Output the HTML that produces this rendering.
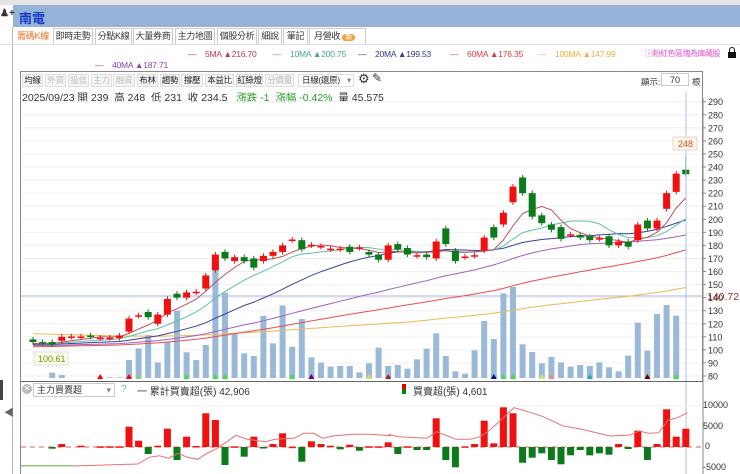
<!DOCTYPE html>
<html><head><meta charset="utf-8">
<style>
*{margin:0;padding:0;box-sizing:border-box}
body{width:740px;height:474px;overflow:hidden;background:#fff;font-family:"Liberation Sans","Noto Sans CJK TC",sans-serif;font-size:10px;color:#333;position:relative}
.a{position:absolute;white-space:nowrap}
.tab{position:absolute;top:28px;height:16px;border:1px solid #ccc;border-bottom:none;font-size:9px;line-height:15px;text-align:center;color:#333;background:#fff;white-space:nowrap;overflow:hidden;letter-spacing:-0.3px}
.btn{position:absolute;top:74px;height:13px;border:1px solid #ddd;font-size:8.5px;line-height:11px;text-align:center;color:#222;background:#f6f6f6;white-space:nowrap;overflow:hidden;letter-spacing:-0.3px}
.dis{color:#bbb}
.lg{position:absolute;white-space:nowrap;font-size:8.5px;letter-spacing:-0.2px}
</style></head><body>
<div class="a" style="left:0;top:0;width:740px;height:5px;background:#e4e4e4"></div>
<div class="a" style="left:13px;top:5px;width:727px;height:22px;background:#95b3d7"></div>
<div class="a" style="left:0;top:8px;font-size:10px;color:#333;font-weight:bold">♟+</div>
<div class="a" style="left:19px;top:8px;font-size:13px;color:#1438c8;font-weight:bold">南電</div>
<div class="a" style="left:12px;top:27px;width:1px;height:447px;background:#bbb"></div>
<div class="a" style="left:0;top:380px;width:3px;height:20px;background:#444"></div>
<div class="a" style="left:4px;top:404px;font-size:10px;color:#666">◀</div>
<div class="a" style="left:0;top:44px;width:740px;height:1px;background:#ddd"></div>

<div class="tab" style="left:15px;width:36px;color:#f07020;border-color:#fff">籌碼K線</div>
<div class="tab" style="left:53px;width:40px">即時走勢</div>
<div class="tab" style="left:95px;width:37px">分點K線</div>
<div class="tab" style="left:133px;width:40px">大量券商</div>
<div class="tab" style="left:175px;width:40px">主力地圖</div>
<div class="tab" style="left:217px;width:40px">個股分析</div>
<div class="tab" style="left:258px;width:24px">細說</div>
<div class="tab" style="left:283px;width:25px">筆記</div>
<div class="tab" style="left:309px;width:57px;text-align:left;padding-left:4px">月營收 <span style="background:#f5a040;color:#fff;border-radius:6px;padding:0 3px;font-size:7px">新</span></div>

<div class="lg" style="left:188px;top:49px;color:#c03850">—&nbsp;&nbsp;&nbsp;&nbsp;5MA ▲216.70</div>
<div class="lg" style="left:273px;top:49px;color:#40a890">—&nbsp;&nbsp;&nbsp;&nbsp;10MA ▲200.75</div>
<div class="lg" style="left:358px;top:49px;color:#303890">—&nbsp;&nbsp;&nbsp;&nbsp;20MA ▲199.53</div>
<div class="lg" style="left:450px;top:49px;color:#e03838">—&nbsp;&nbsp;&nbsp;&nbsp;60MA ▲176.35</div>
<div class="lg" style="left:538px;top:49px;color:#f0b040">—&nbsp;&nbsp;&nbsp;&nbsp;100MA ▲147.99</div>
<div class="lg" style="left:645px;top:48px;font-size:8px;color:#e050d0;letter-spacing:-0.5px">ⓘ粉紅色區塊為庫藏股</div>
<div class="a" style="left:729px;top:47px;width:6px;height:5px;border:1.5px solid #111;border-bottom:none;border-radius:3px 3px 0 0"></div>
<div class="a" style="left:728px;top:52px;width:8px;height:6px;background:#111"></div>
<div class="lg" style="left:95px;top:60px;color:#9040b0">—&nbsp;&nbsp;&nbsp;&nbsp;40MA ▲187.71</div>

<div class="a" style="left:20px;top:71px;width:683px;height:310px;border:1px solid #888;border-bottom:none"></div>
<div class="btn" style="left:22px;width:21px">均線</div>
<div class="btn dis" style="left:45px;width:21px">外資</div>
<div class="btn dis" style="left:68px;width:21px">投信</div>
<div class="btn dis" style="left:91px;width:21px">主力</div>
<div class="btn dis" style="left:113px;width:22px">融資</div>
<div class="btn" style="left:137px;width:21px">布林</div>
<div class="btn" style="left:160px;width:20px">趨勢</div>
<div class="btn" style="left:181px;width:22px">撐壓</div>
<div class="btn" style="left:205px;width:29px">本益比</div>
<div class="btn" style="left:236px;width:27px">紅綠燈</div>
<div class="btn dis" style="left:265px;width:29px">分價量</div>
<div class="btn" style="left:298px;width:56px;text-align:left;padding-left:3px;background:#fff">日線(還原)<span style="position:absolute;right:2px;color:#888">▾</span></div>
<div class="a" style="left:358px;top:71px;font-size:13px;color:#333">⚙</div>
<div class="a" style="left:372px;top:71px;font-size:12px;color:#333">✎</div>
<div class="a" style="left:641px;top:76px;font-size:8.5px">顯示:</div>
<div class="a" style="left:661px;top:73px;width:28px;height:13px;border:1px solid #ccc;font-size:9px;text-align:center;line-height:12px">70</div>
<div class="a" style="left:692px;top:76px;font-size:8.5px">根</div>
<div class="a" style="left:22px;top:90px;font-size:10.5px;color:#333">2025/09/23 開 239 &nbsp;高 248 &nbsp;低 231 &nbsp;收 234.5 &nbsp;&nbsp;<span style="color:#2a9a2a">漲跌 -1 &nbsp;漲幅 -0.42%</span> &nbsp;量 45,575</div>

<svg class="a" style="left:0;top:0" width="740" height="474" id="sv"></svg>

<div class="a" style="left:20px;top:381px;width:683px;height:1px;background:#666"></div>
<div class="a" style="left:20px;top:381px;width:1px;height:93px;background:#888"></div>
<div class="a" style="left:22px;top:384px;width:10px;height:10px;border-radius:5px;background:#bbb;color:#fff;font-size:8px;line-height:10px;text-align:center">✕</div>
<div class="a" style="left:33px;top:383px;width:82px;height:14px;border:1px solid #ccc;font-size:9px;line-height:12px;padding-left:3px">主力買賣超<span style="position:absolute;right:3px;color:#888">▾</span></div>
<div class="a" style="left:121px;top:384px;font-size:10px;color:#6ab0e0">?</div>
<div class="a" style="left:137px;top:383px;font-size:10px;color:#333">一 累計買賣超(張) 42,906</div>
<div class="a" style="left:402px;top:384px;width:4px;height:5px;background:#e00"></div>
<div class="a" style="left:402px;top:389px;width:4px;height:5px;background:#080"></div>
<div class="a" style="left:413px;top:383px;font-size:10px;color:#333">買賣超(張) 4,601</div>
<div class="a" style="left:703px;top:400px;font-size:9px">10000</div>
<div class="a" style="left:703px;top:421px;font-size:9px">5000</div>
<div class="a" style="left:705px;top:441px;font-size:9px">0</div>
<div class="a" style="left:703px;top:462px;font-size:9px">-5000</div>

<script>
(function(){
var S=document.getElementById('sv'),h='';
function y(p){return 376-(p-80)*1.306}
for(var p=80;p<=290;p+=10){var yy=y(p);h+='<line x1="21" x2="702" y1="'+yy+'" y2="'+yy+'" stroke="#f0f0f0"/><line x1="703" x2="706" y1="'+yy+'" y2="'+yy+'" stroke="#888"/><text x="708" y="'+(yy+3.5)+'" font-size="9" fill="#333" font-family="Liberation Sans">'+p+'</text>';}
h+='<line x1="703" x2="703" y1="98" y2="474" stroke="#888"/>';
var C=[[108,106],[106,105],[106,104],[107,110],[110,110.3],[110,110.3],[111,110],[109,109.3],[109,109.3],[109,111],[114,124],[126,126.5],[129,125],[120,127],[127,139],[143,140],[140,144],[144,144.5],[147,157],[161,173],[175,170],[168,171],[171,168],[170,163],[168,172],[172,175],[175,180],[184,184.5],[184,177],[180,180.5],[179,179.5],[177,177.5],[177,177.5],[179,175],
[178,178.5],[175,173],[173,169],[169,180],[181,177],[178,173],[172,172.5],[173,171],[170,183],[193,181],[176,168],[171,171.5],[172,172.5],[176,186],[194,186],[196,205],[213,225],[232,220],[220,202],[203,197],[196,192],[194,185],[188,188.5],[188,186],[187,184],[185,185.5],[187,180],[180,183],[183,179],[184,196],[199,193],[193,199],[208,220],[221,235],[238,234.5]];
var V=[655,655,638,645,655,655,660,660,652,652,600,565,525,607,545,452,577,600,555,330,398,520,580,588,468,550,436,560,477,592,608,620,618,618];
V=V.map(function(v){return 160+v/3});
[718,727,700,653,708,705,716,688,656,610,678,724,731,661,573,627,490,471,643,666,700,681,697,710,705,708,697,712,724,677,578,662,552,525,557].forEach(function(v,i){if(i>0)V.push(130+v/3)});
function X(k){return 33+k*9.6}
var cl=[];for(var i=0;i<100;i++)cl.push(i<40?128:(100+(i-40)*0.08));C.forEach(function(c){cl.push(c[1])});
function ma(n,col){var pts=[];for(var k=0;k<C.length;k++){var e=100+k,s=0;for(var j=e-n+1;j<=e;j++)s+=cl[j];pts.push(X(k).toFixed(1)+','+y(s/n).toFixed(1));}return '<polyline points="'+pts.join(' ')+'" fill="none" stroke="'+col+'" stroke-width="1"/>';}
V.forEach(function(t,k){h+='<rect x="'+(X(k)-3)+'" y="'+t+'" width="6" height="'+(378-t)+'" fill="#9ab8d8"/>'});
h+='<line x1="21" x2="702" y1="296" y2="296" stroke="#aab4e0"/>';
h+=ma(100,'#f0b850')+ma(60,'#e85050')+ma(40,'#a060c0')+ma(20,'#3840a0')+ma(10,'#60c0a8')+ma(5,'#c05060');
C.forEach(function(c,k){var o=c[0],cc=c[1],up=cc>o,col=up?'#f01010':'#0a7a1a',hi=Math.max(o,cc)+2,lo=Math.min(o,cc)-2;if(k==68)hi=248;var t=y(Math.max(o,cc)),b=y(Math.min(o,cc));h+='<line x1="'+X(k)+'" x2="'+X(k)+'" y1="'+y(hi)+'" y2="'+y(lo)+'" stroke="'+col+'"/><rect x="'+(X(k)-3.5)+'" y="'+t+'" width="7" height="'+Math.max(1.5,b-t)+'" fill="'+col+'"/>'});
h+='<line x1="686" x2="686" y1="92" y2="474" stroke="#a8c0e8"/>';
h+='<rect x="673" y="137" width="24" height="13" fill="#fffbe0" stroke="#ecd"/><text x="678" y="147" font-size="9" fill="#e04040" font-family="Liberation Sans">248</text>';
h+='<text x="707" y="300" font-size="10.5" fill="#a02828" font-family="Liberation Sans">140.72</text>';
h+='<rect x="34" y="352" width="34" height="13" fill="#fffbe0" stroke="#dde"/><text x="38" y="362" font-size="9" fill="#5a9a2a" font-family="Liberation Sans">100.61</text>';
[[7,'#e00'],[10,'#e00'],[11,'#8c8'],[16,'#4d4'],[19,'#4d4'],[20,'#4d4'],[27,'#4d4'],[29,'#608'],[35,'#dd6'],[37,'#a22'],[48,'#018'],[49,'#4d4'],[50,'#4d4'],[53,'#ce6'],[54,'#e88'],[58,'#2aa'],[64,'#600'],[67,'#4d4']].forEach(function(m){var x=X(m[0]);h+='<polygon points="'+(x-3)+',379 '+(x+3)+',379 '+x+',374" fill="'+m[1]+'"/>'});
h+='<line x1="21" x2="702" y1="447" y2="447" stroke="#e06060" stroke-dasharray="5,4"/>';
h+='<line x1="21" x2="702" y1="406" y2="406" stroke="#f2f2f2"/>';
var L={2:-2,3:222,5:227,7:229,8:229,9:229,10:170,11:212,12:252,13:227,14:176,15:270,16:200,17:228,18:130,19:150,20:285,21:229,22:260,23:200,24:235,25:222,26:190,27:230,28:275,29:214,30:222,31:227,32:238,33:224,34:242,35:229,36:229,37:217,38:252,39:229,40:240,41:240,42:145,43:270,44:292,45:229,46:222,47:152,48:220,49:112,50:130,51:278,52:263,53:250,54:270,55:283,56:256,57:240,58:256,59:250,60:254,61:222,62:237,63:182,64:270,65:222,66:118,67:200,68:176};
for(var k in L){var v=L[k];if(v==-2)v=236;var yv=370+v/3,x=X(+k);var hh=Math.max(1.5,Math.abs(yv-447));var ry=yv<447?yv:447;h+='<rect x="'+(x-3.5)+'" y="'+ry.toFixed(1)+'" width="7" height="'+hh.toFixed(1)+'" fill="'+(yv<447?'#f01010':'#0a7a1a')+'"/>';}
var Lp=[[0,287],[155,287],[160,288],[350,282],[385,262],[415,257],[443,265],[470,250],[500,262],[530,268],[558,250],[588,235],[618,215],[645,196],[675,207],[733,215],[762,208],[818,205],[848,190],[878,190],[905,205],[935,198],[993,193],[1050,193],[1110,197]].map(function(p){return (21+p[0]/3).toFixed(1)+','+(370+p[1]/3).toFixed(1)});
var Rp=[[56,193],[85,200],[170,205],[200,185],[258,208],[300,208],[330,200],[360,180],[403,140],[432,113],[490,130],[520,140],[577,167],[635,178],[720,198],[780,195],[808,183],[836,190],[866,188],[895,150],[923,143],[952,128]].map(function(p){return (370+p[0]/3).toFixed(1)+','+(370+p[1]/3).toFixed(1)});
h+='<polyline points="'+Lp.concat(Rp).join(' ')+'" fill="none" stroke="#e87070" stroke-width="1"/>';
h+='<line x1="21" x2="72" y1="465.7" y2="465.7" stroke="#6c6"/>';
S.innerHTML=h;
})();
</script>
</body></html>
